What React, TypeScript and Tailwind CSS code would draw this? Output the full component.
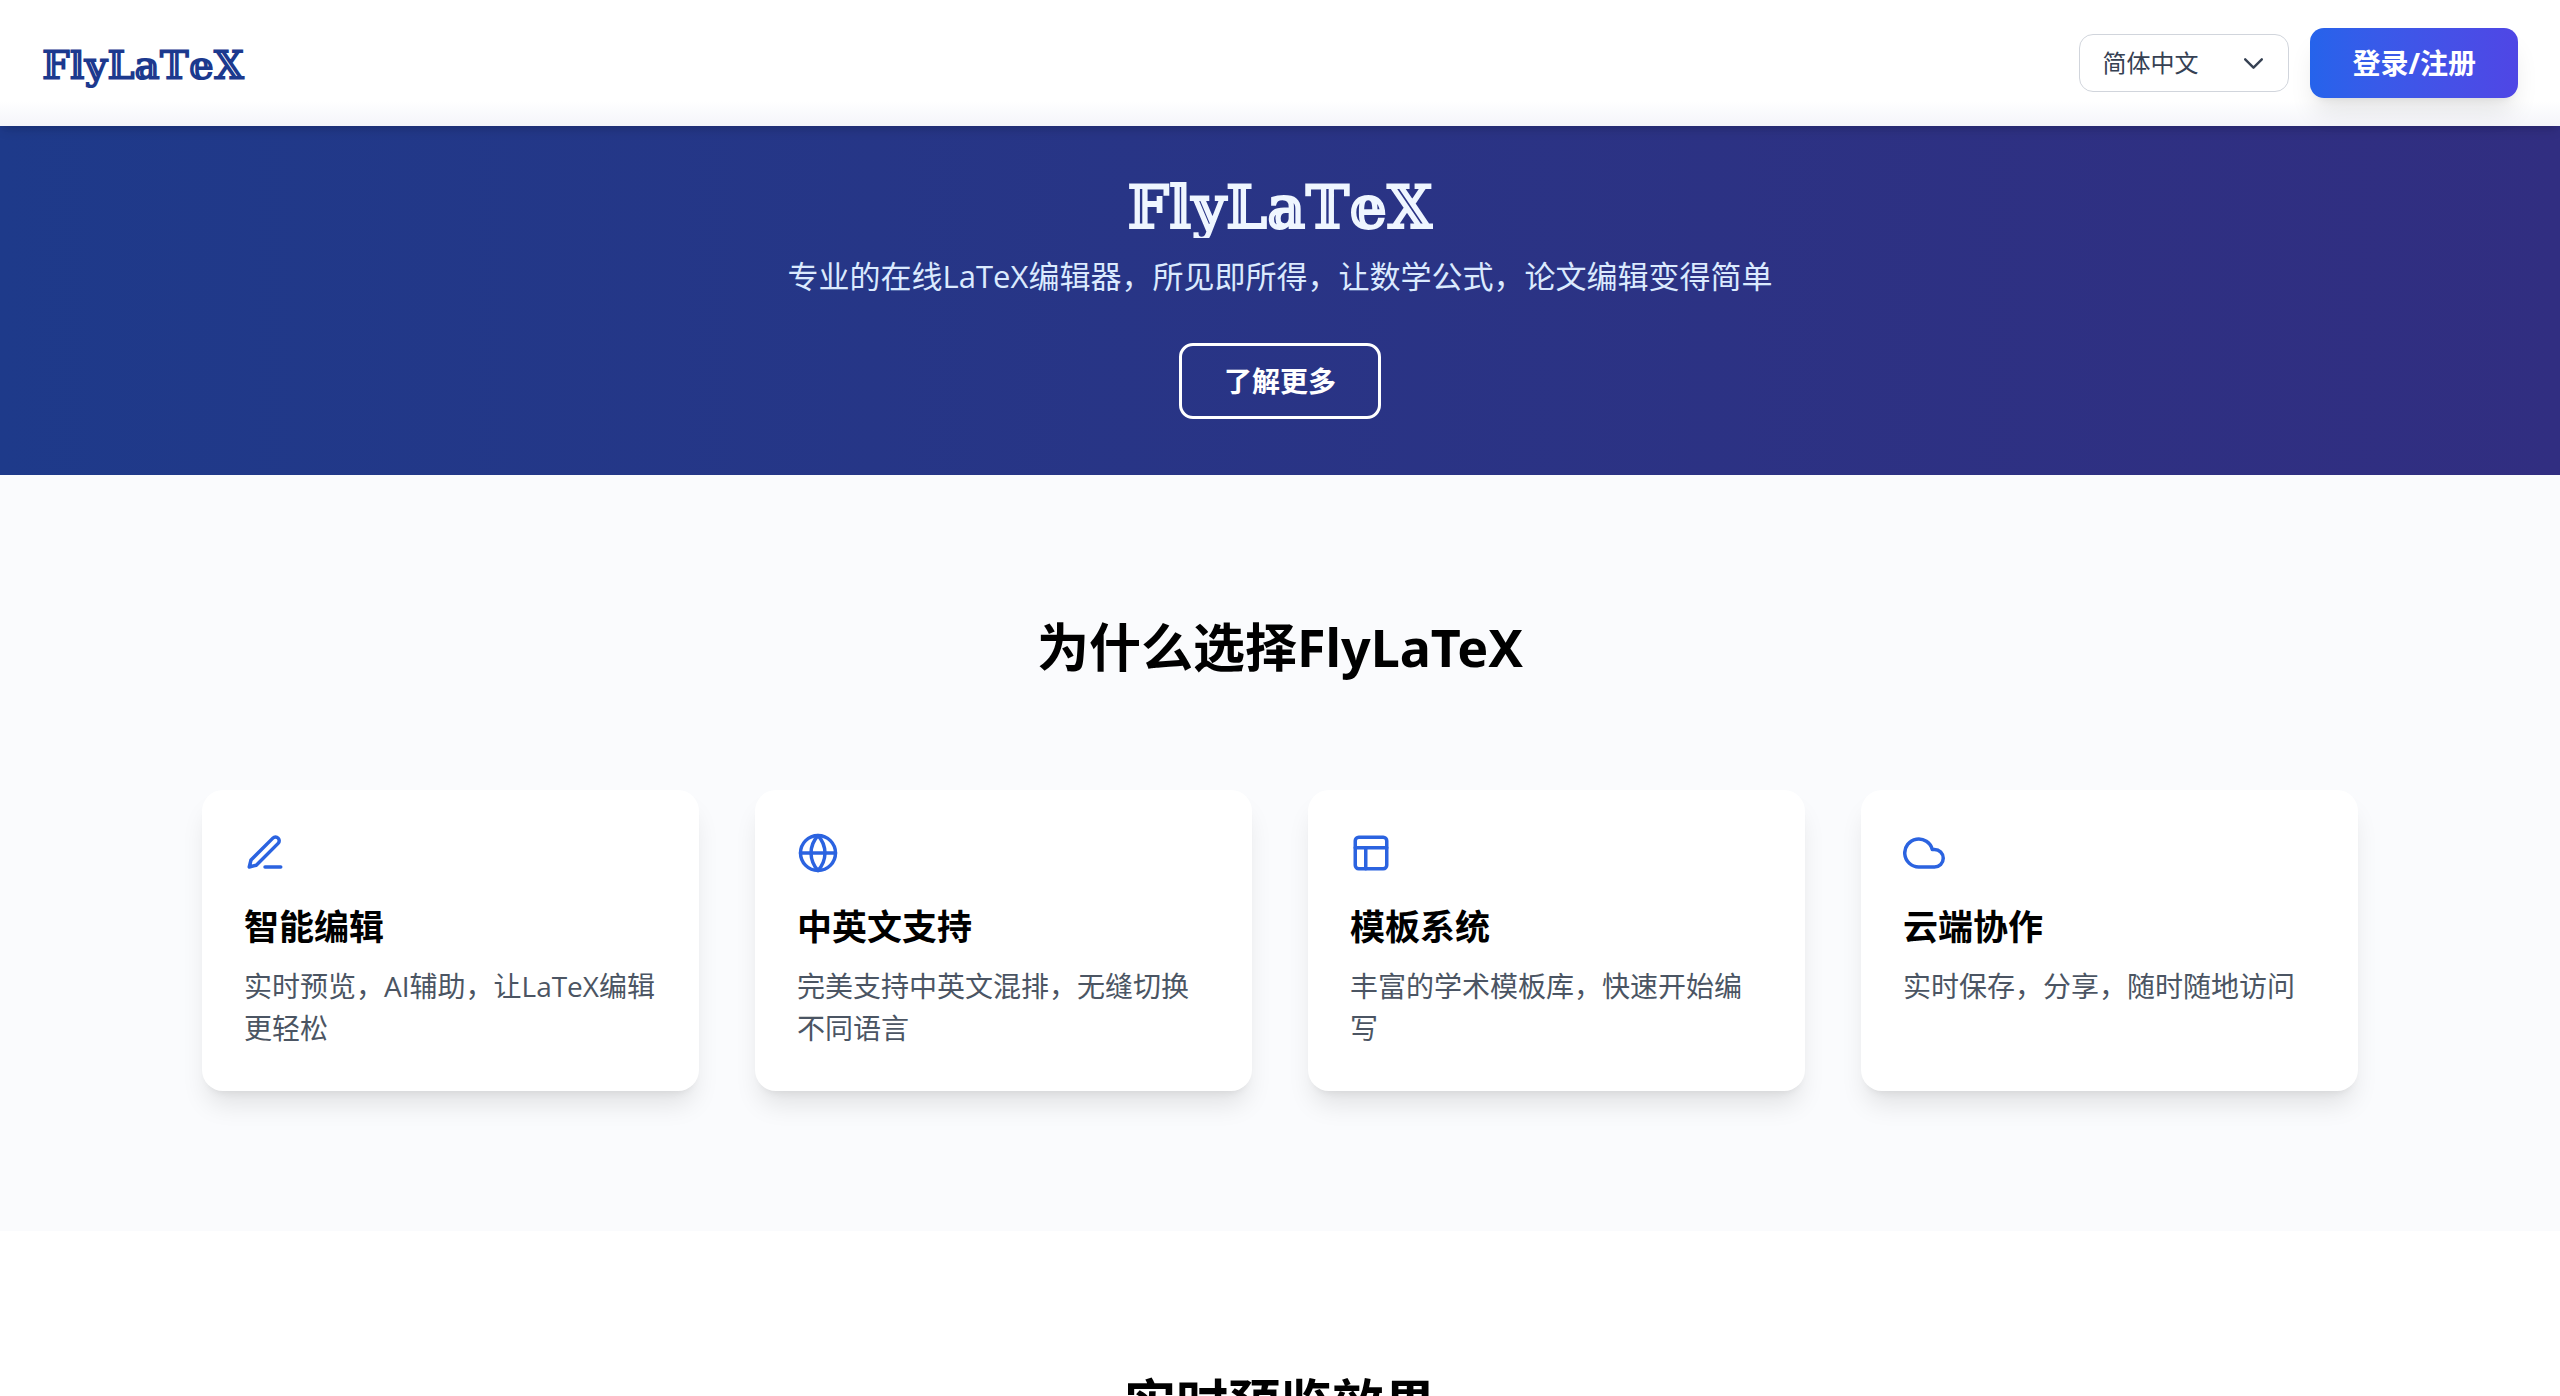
const icons = {
  edit: (
    <>
      <path d="M12 20h9" />
      <path d="M16.5 3.5a2.121 2.121 0 0 1 3 3L7 19l-4 1 1-4L16.5 3.5z" />
    </>
  ),
  globe: (
    <>
      <circle cx="12" cy="12" r="10" />
      <path d="M2 12h20" />
      <path d="M12 2a15.3 15.3 0 0 1 4 10 15.3 15.3 0 0 1-4 10 15.3 15.3 0 0 1-4-10 15.3 15.3 0 0 1 4-10z" />
    </>
  ),
  layout: (
    <>
      <rect x="3" y="3" width="18" height="18" rx="2" ry="2" />
      <path d="M3 9h18" />
      <path d="M9 21V9" />
    </>
  ),
  cloud: <path d="M18 10h-1.26A8 8 0 1 0 9 20h9a5 5 0 0 0 0-10z" />,
};

const features = [
  { icon: icons.edit, title: "智能编辑", text: "实时预览，AI辅助，让LaTeX编辑更轻松" },
  { icon: icons.globe, title: "中英文支持", text: "完美支持中英文混排，无缝切换不同语言" },
  { icon: icons.layout, title: "模板系统", text: "丰富的学术模板库，快速开始编写" },
  { icon: icons.cloud, title: "云端协作", text: "实时保存，分享，随时随地访问" },
];

const headingClass =
  "text-center font-['Noto_Sans','Noto_Sans_CJK_SC',sans-serif] text-[52px] leading-[63px] font-bold";

function Header() {
  return (
    <header className="relative z-10 flex items-center justify-between bg-linear-to-b from-white from-80% to-[#f4f5fa] px-[42px] py-7 shadow-[0_7px_10px_-2px_rgba(0,0,0,0.1),0_4px_7px_-4px_rgba(0,0,0,0.1)]">
      <a
        href="#top"
        aria-label="FlyLaTeX"
        className="pt-1 font-['DejaVu_Serif',serif] text-[39px] leading-[49px] font-bold text-blue-900"
      >
        𝔽𝕝𝕪𝕃𝕒𝕋𝕖𝕏
      </a>
      <div className="flex items-center gap-[21px]">
        <div className="relative">
          <select
            aria-label="语言"
            className="w-[210px] appearance-none rounded-[14px] border border-gray-300 bg-white py-[10px] pr-14 pl-[22px] text-[24px] leading-9 text-gray-700"
          >
            <option>简体中文</option>
            <option>English</option>
          </select>
          <svg
            className="pointer-events-none absolute top-1/2 right-[17px] size-[37px] -translate-y-1/2 text-gray-700"
            viewBox="0 0 20 20"
            fill="none"
            stroke="currentColor"
            strokeWidth="1.3"
            strokeLinecap="round"
            strokeLinejoin="round"
            aria-hidden="true"
          >
            <path d="M5.5 8l4.5 4.5 4.5-4.5" />
          </svg>
        </div>
        <button
          type="button"
          className="rounded-[14px] bg-linear-to-r from-[#2563eb] to-[#4f46e5] px-[42px] py-[14px] text-[28px] leading-[42px] font-bold text-white shadow-[0_18px_26px_-5px_rgba(0,0,0,0.1),0_7px_10px_-7px_rgba(0,0,0,0.1)]"
        >
          登录/注册
        </button>
      </div>
    </header>
  );
}

function Hero() {
  return (
    <section className="flex flex-col items-center bg-linear-to-r from-[#1e3a8a] to-[#312e81] px-[42px] py-14 text-center">
      <h1
        aria-label="FlyLaTeX"
        className="bg-blue-50 bg-clip-text pb-1 font-['DejaVu_Serif',serif] text-[59px] leading-[52px] font-bold text-transparent"
      >
        𝔽𝕝𝕪𝕃𝕒𝕋𝕖𝕏
      </h1>
      <p className="mt-[14px] text-[31px] leading-[49px] text-blue-100">
        专业的在线LaTeX编辑器，所见即所得，让数学公式，论文编辑变得简单
      </p>
      <button
        type="button"
        className="mt-[42px] rounded-[14px] border-3 border-white px-[42px] py-[14px] text-[28px] leading-[42px] font-bold text-white"
      >
        了解更多
      </button>
    </section>
  );
}

function Features() {
  return (
    <section className="bg-[#fafbfd] py-[140px]">
      <div className="mx-auto max-w-[2240px] px-[42px]">
        <h2 className={headingClass}>为什么选择FlyLaTeX</h2>
        <ul className="mt-28 grid grid-cols-4 gap-14">
          {features.map(({ icon, title, text }) => (
            <li
              key={title}
              className="rounded-[21px] bg-white p-[42px] shadow-[0_18px_26px_-5px_rgba(0,0,0,0.1),0_7px_10px_-7px_rgba(0,0,0,0.1)]"
            >
              <svg
                className="size-[42px] text-[#2b63e0]"
                viewBox="0 0 24 24"
                fill="none"
                stroke="currentColor"
                strokeWidth="2"
                strokeLinecap="round"
                strokeLinejoin="round"
                aria-hidden="true"
              >
                {icon}
              </svg>
              <h3 className="mt-7 text-[35px] leading-[49px] font-bold">{title}</h3>
              <p className="mt-[14px] text-[28px] leading-[42px] text-[#4b5563]">{text}</p>
            </li>
          ))}
        </ul>
      </div>
    </section>
  );
}

export default function App() {
  return (
    <div
      id="top"
      lang="zh-CN"
      className="bg-white font-['Open_Sans','Noto_Sans_CJK_SC',sans-serif] text-black"
    >
      <Header />
      <main>
        <Hero />
        <Features />
        <section className="bg-white py-[140px]">
          <h2 className={headingClass}>实时预览效果</h2>
        </section>
      </main>
    </div>
  );
}
